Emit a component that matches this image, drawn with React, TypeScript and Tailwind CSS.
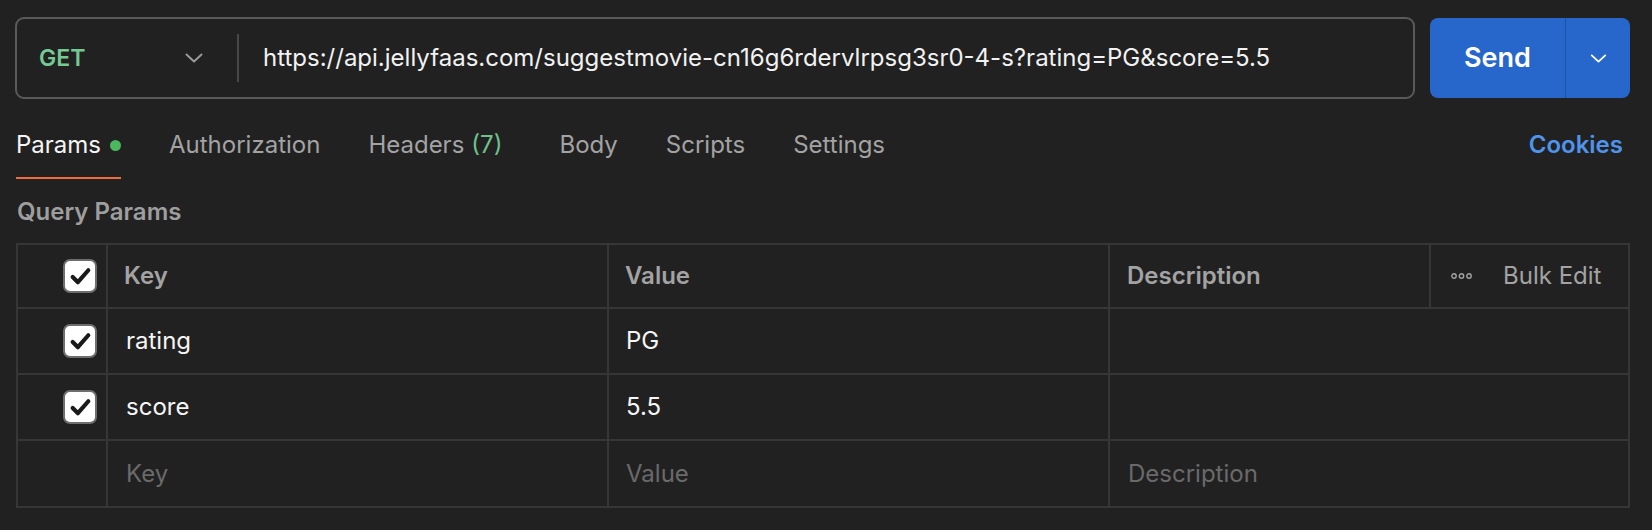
import React from 'react';

const tabs = [
  { label: 'Params', active: true, dot: true },
  { label: 'Authorization' },
  { label: 'Headers', count: '(7)' },
  { label: 'Body' },
  { label: 'Scripts' },
  { label: 'Settings' },
];

const params = [
  { key: 'rating', value: 'PG' },
  { key: 'score', value: '5.5' },
];

function Chevron({ className }: { className?: string }) {
  return (
    <svg viewBox="0 0 18 10" className={className} fill="none" stroke="currentColor" strokeWidth="2" strokeLinecap="round" strokeLinejoin="round">
      <path d="M1.5 1.5 L9 8.5 L16.5 1.5" />
    </svg>
  );
}

function Checkbox() {
  return (
    <div className="w-[34px] h-[34px] rounded-[7px] border-2 border-[#6e6e6e] bg-white flex items-center justify-center">
      <svg viewBox="0 0 24 24" className="w-[25px] h-[25px]" fill="none" stroke="#1a1a1a" strokeWidth="4" strokeLinecap="round" strokeLinejoin="round">
        <path d="M4.5 12.5 L9.5 17.5 L19.5 6" />
      </svg>
    </div>
  );
}

export default function App() {
  return (
    <div className="w-full h-[530px] bg-[#212121] overflow-hidden" style={{ fontFamily: 'Inter, "Noto Sans", sans-serif' }}>
      {/* Request bar */}
      <div className="flex items-center pt-[17px] pl-[15px] pr-[22px] gap-[15px]">
        <div className="flex-1 h-[82px] rounded-[9px] border-2 border-[#5a5a5a] flex items-center">
          <div className="w-[220px] h-full flex items-center justify-between pl-[22px] pr-[34px]">
            <span className="text-[23px] font-semibold text-[#75c994]">GET</span>
            <Chevron className="w-[18px] h-[10px] text-[#9a9a9a]" />
          </div>
          <div className="w-[2px] h-[48px] bg-[#474747]" />
          <div className="pl-[24px] text-[24px] text-[#f2f2f2] whitespace-nowrap">
            https://api.jellyfaas.com/suggestmovie-cn16g6rdervlrpsg3sr0-4-s?rating=PG&amp;score=5.5
          </div>
        </div>
        <div className="flex h-[80px] w-[200px] rounded-[8px] bg-[#2767cc] overflow-hidden">
          <button className="w-[135px] h-full text-[27px] font-semibold text-white">Send</button>
          <div className="w-[1px] h-full bg-[#1d52a6]" />
          <button className="flex-1 h-full flex items-center justify-center">
            <Chevron className="w-[17px] h-[9px] text-white" />
          </button>
        </div>
      </div>

      {/* Tabs */}
      <div className="flex items-start justify-between pl-[16px] pr-[29px] mt-[27px]">
        <div className="flex gap-[48px]">
          {tabs.map((t) => (
            <div key={t.label} className={'flex flex-col ' + (t.count ? 'mr-[9px]' : '')}>
              <div className="flex items-center h-[38px] text-[24px]">
                <span className={t.active ? 'text-[#f5f5f5]' : 'text-[#a3a3a3]'}>{t.label}</span>
                {t.count && <span className="ml-[7px] text-[#6fc28c]">{t.count}</span>}
                {t.dot && <span className="ml-[9px] w-[11px] h-[11px] rounded-full bg-[#49b85f]" />}
              </div>
              <div className={'h-[2px] mt-[13px] ' + (t.active ? 'bg-[#f06c3f]' : 'bg-transparent')} />
            </div>
          ))}
        </div>
        <div className="flex items-center h-[38px] text-[24px] font-semibold text-[#4f93ea]">Cookies</div>
      </div>

      {/* Query params */}
      <div className="pl-[17px] mt-[16px] h-[34px] flex items-center text-[24px] font-semibold text-[#9e9e9e]">Query Params</div>

      <div className="ml-[16px] mr-[22px] mt-[14px] border-2 border-[#363636] text-[24px]">
        {/* header row */}
        <div className="flex h-[64px] border-b-2 border-[#363636]">
          <div className="w-[90px] border-r-2 border-[#363636] flex items-center pl-[45px]">
            <Checkbox />
          </div>
          <div className="w-[501px] border-r-2 border-[#363636] flex items-center pl-[16px] font-semibold text-[#a3a3a3]">Key</div>
          <div className="w-[501px] border-r-2 border-[#363636] flex items-center pl-[16px] font-semibold text-[#a3a3a3]">Value</div>
          <div className="w-[321px] border-r-2 border-[#363636] flex items-center pl-[17px] font-semibold text-[#a3a3a3]">Description</div>
          <div className="flex-1 flex items-center pl-[20px] text-[#a3a3a3]">
            <svg viewBox="0 0 21 6" className="w-[21px] h-[6px]" fill="none" stroke="#a3a3a3" strokeWidth="1.4">
              <circle cx="3" cy="3" r="2.2" />
              <circle cx="10.5" cy="3" r="2.2" />
              <circle cx="18" cy="3" r="2.2" />
            </svg>
            <span className="ml-[31px]">Bulk Edit</span>
          </div>
        </div>
        {params.map((p) => (
          <div key={p.key} className="flex h-[66px] border-b-2 border-[#363636]">
            <div className="w-[90px] border-r-2 border-[#363636] flex items-center pl-[45px]">
              <Checkbox />
            </div>
            <div className="w-[501px] border-r-2 border-[#363636] flex items-center pl-[18px] text-[#f5f5f5]">{p.key}</div>
            <div className="w-[501px] border-r-2 border-[#363636] flex items-center pl-[17px] text-[#f5f5f5]">{p.value}</div>
            <div className="flex-1" />
          </div>
        ))}
        <div className="flex h-[65px]">
          <div className="w-[90px] border-r-2 border-[#363636]" />
          <div className="w-[501px] border-r-2 border-[#363636] flex items-center pl-[18px] text-[#6a6a6a]">Key</div>
          <div className="w-[501px] border-r-2 border-[#363636] flex items-center pl-[17px] text-[#6a6a6a]">Value</div>
          <div className="flex-1 flex items-center pl-[18px] text-[#6a6a6a]">Description</div>
        </div>
      </div>
    </div>
  );
}
